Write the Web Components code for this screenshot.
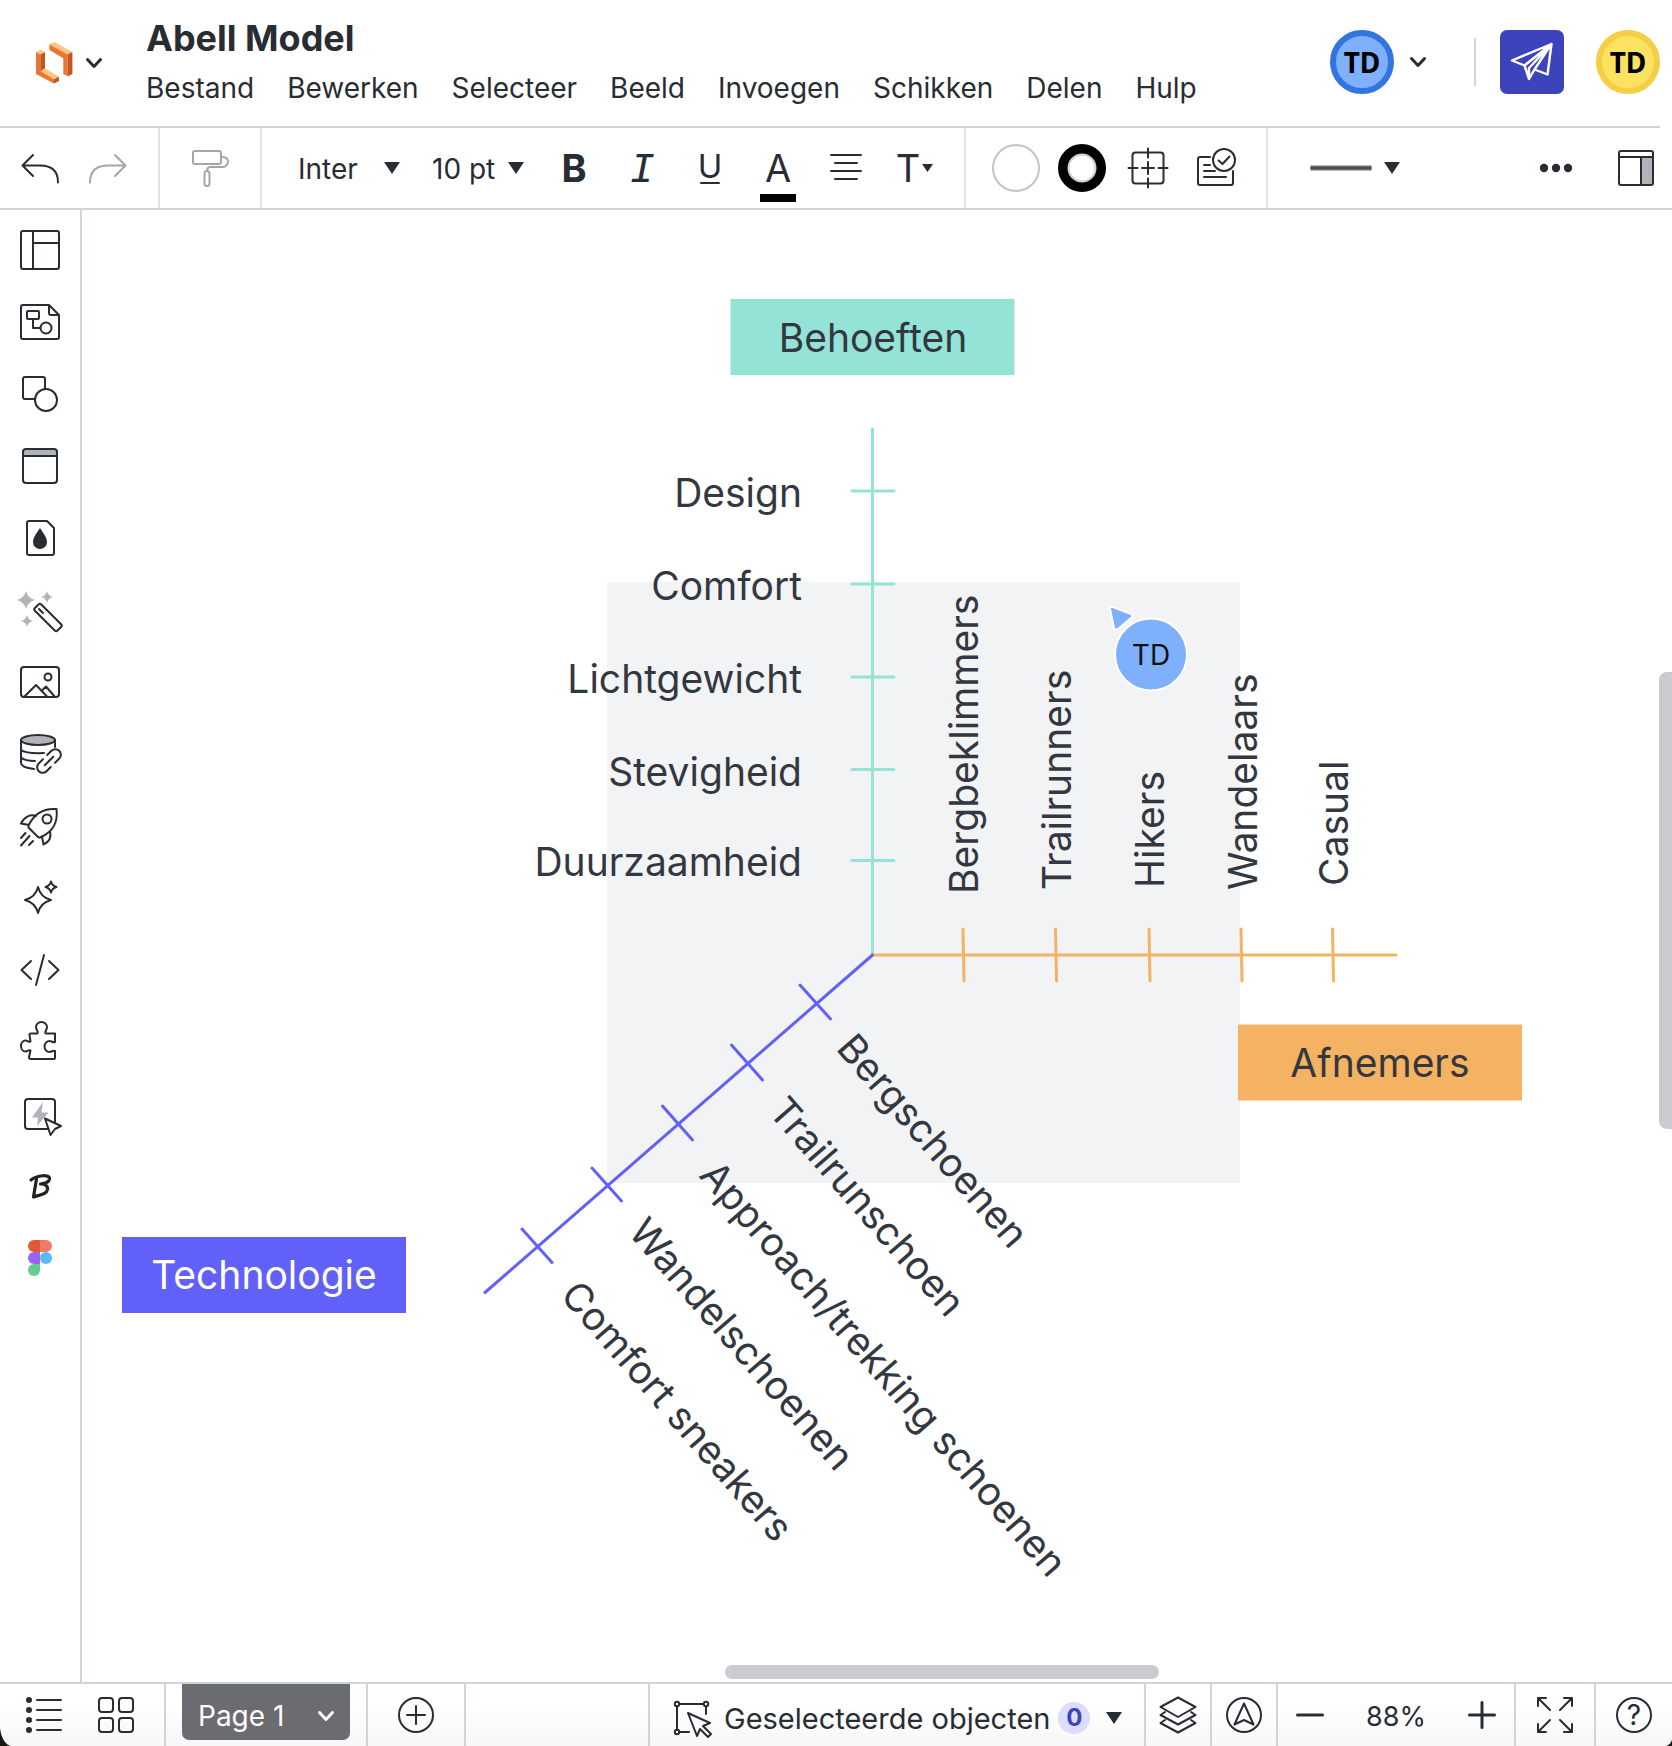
<!DOCTYPE html>
<html lang="nl">
<head>
<meta charset="utf-8">
<meta name="viewport" content="width=device-width, initial-scale=1">
<title>Abell Model</title>
<style>
  html, body { height: 100%; margin: 0; }
  body { background: #1b190f; font-family: Inter, "Liberation Sans", sans-serif; font-size: 28px; color: #282c33; }
</style>
</head>
<body>
<lucid-app></lucid-app>
<script>
const GREY = '#b1b3b8';
const star = (x, y, r) => `M${x} ${y - r}Q${x + r * .2} ${y - r * .2} ${x + r} ${y}Q${x + r * .2} ${y + r * .2} ${x} ${y + r}Q${x - r * .2} ${y + r * .2} ${x - r} ${y}Q${x - r * .2} ${y - r * .2} ${x} ${y - r}z`;

/* Drawings on a 48 x 48 grid, stroked with the current colour. */
const ICONS = {
  logo: `<g stroke="none"><path fill="#f9c77d" d="M19.400 5.300 24.600 3 42.400 13 37.600 15.500zM6 13l4.300-2.200L15 13l-4.700 2.400zM15 29.300l14 8.400-5 2.600-13.700-8z"/><path fill="#eb7533" d="M19.400 5.300 37.600 15.500V37l-4.300-2V19.300L19.400 11zM6 13l4.300 2.400V32L24 40.300v4.200L6 35z"/><path fill="#bf5623" d="M37.600 15.500 42.400 13v22l-4.800 2.500zM10.300 15.400 15 13v16.300l-4.700 2.900zM24 40.300l5-2.600V42l-5 2.500z"/></g>`,
  chevron: `<path stroke-width="3" d="M17.500 20.500 24 27.500 30.500 20.500"/>`,
  undo: `<path d="M17 11 6.500 21.500 17 32M7 21.500h17c12 0 18 6 18 17"/>`,
  redo: `<path stroke="#a5a6ab" d="M31 11 41.500 21.500 31 32M41 21.500H24c-12 0-18 6-18 17"/>`,
  roller: `<g stroke="#a5a6ab"><rect x="7" y="7" width="28" height="13" rx="2"/><path d="M35 13h2c3 0 5 2 5 4.500S40 23 37 23H25c-3 0-4 1.500-4 4"/><rect x="18.500" y="27" width="5" height="15" rx="2.500"/></g>`,
  bold: `<text x="24" y="38" font-size="38" font-weight="700">B</text>`,
  italic: `<text x="24" y="38" font-size="42" font-style="italic" style="font-family:'Liberation Mono',monospace">I</text>`,
  underline: `<text x="24" y="34" font-size="33">U</text><path d="M15 39h18"/>`,
  colour: `<text x="24" y="38" font-size="38">A</text><path fill="#000" stroke="none" d="M6 50h36v8H6z"/>`,
  align: `<path d="M9 11h30M13 19h22M9 27h30M13 35h22"/>`,
  type: `<text x="18" y="38" font-size="38">T</text><path fill="currentColor" stroke="none" d="M32 20h11l-5.500 8z"/>`,
  fill: `<circle cx="24" cy="24" r="23" stroke="#c2c3c6"/>`,
  border: `<circle cx="24" cy="24" r="18.500" stroke="#000" stroke-width="11"/><circle cx="24" cy="24" r="13.500" stroke="#cfd3da"/>`,
  target: `<rect x="8.500" y="8.500" width="31" height="31" rx="3"/><path d="M24 4.500v9M24 34.500v9M4.500 24h9M34.500 24h9M18 24h12M24 18v12"/>`,
  tasks: `<path d="M20 13H10q-2 0-2 2v24q0 2 2 2h31q2 0 2-2V27M14 21h6M14 27h11M14 33h22"/><circle cx="34" cy="16" r="11"/><path d="m28.500 16.500 4 3.500 7-7.500"/>`,
  line: `<path stroke="#6d6e70" stroke-width="5" stroke-linecap="butt" d="M-5.500 24h61"/><path stroke="#4b4b4d" stroke-linecap="butt" d="M-5.500 24h61"/>`,
  triangle: `<path fill="currentColor" stroke="none" d="M16 18h16l-8 12z"/>`,
  dots: `<g fill="currentColor" stroke="none"><circle cx="12" cy="24" r="4.200"/><circle cx="24" cy="24" r="4.200"/><circle cx="36" cy="24" r="4.200"/></g>`,
  panel: `<path fill="${GREY}" stroke="none" d="M29 13h12v28H29z"/><rect x="7" y="7" width="34" height="34" rx="2"/><path d="M7 13h34M29 13v28"/>`,
  send: `<g stroke="#fff" stroke-width="2.400"><path d="M4 22.500 43.500 6 39.500 36.500 26.500 31.500 21 41 16.500 27.500zM16.500 27.500 43.500 6 21 30v11M26.500 31.500 43 6.500"/></g>`,
  layout: `<rect x="5" y="5" width="38" height="38" rx="2"/><path d="M17 5v38M17 17h26"/>`,
  template: `<path d="M7 7h26l10 10v22q0 2-2 2H7q-2 0-2-2V9q0-2 2-2zM33 7v8q0 2 2 2h8M17 21v9h7"/><rect x="11" y="13" width="12" height="8" rx="1"/><circle cx="30" cy="30" r="5.500"/>`,
  shapes: `<path d="M29 18V9q0-2-2-2H9q-2 0-2 2v18q0 2 2 2h9"/><circle cx="30" cy="30" r="11"/>`,
  container: `<path fill="${GREY}" stroke="none" d="M8 8h32v6H8z"/><rect x="7" y="7" width="34" height="34" rx="3"/><path d="M7 14h34"/>`,
  theme: `<path d="M13 7h18l7 7v25q0 2-2 2H13q-2 0-2-2V9q0-2 2-2z"/><path fill="currentColor" stroke="none" d="M24 14c3 5 7 9 7 14a7 7 0 0 1-14 0c0-5 4-9 7-14z"/>`,
  wand: `<g fill="${GREY}" stroke="none"><path d="${star(10, 14, 9)}"/><path d="${star(31, 11, 6)}"/><path d="${star(11, 35, 6)}"/></g><rect x="16" y="27" width="32" height="9" rx="2" transform="rotate(45 32 31.500)"/><path d="m23 23 4 4"/>`,
  image: `<rect x="5" y="9" width="38" height="30" rx="3"/><circle cx="32" cy="19" r="3.500"/><path d="m8 39 12-12 11.500 12M26.500 32l3.500-3.500L39 39"/>`,
  data: `<ellipse cx="22" cy="10" rx="17" ry="5" fill="${GREY}"/><path d="M5 10v23c0 3 5 5 13 6M39 10v7M5 20c4 3 12 3.500 23 3M5 27.500c3 2.500 8 3.500 14 3.500"/><g transform="rotate(-45 33 31)"><path d="M30 25.500h-6a5.500 5.500 0 0 0 0 11h6M36 25.500h6a5.500 5.500 0 0 1 0 11h-6M27 31h12"/></g>`,
  rocket: `<path d="M40.500 7C28 6 18.500 11 12.500 23.500v2L22 35q1 1 3 0C38 29 42 20 40.500 7zM20 14C14 12 8 15 5 21.500l8 1.500M34 29c1.500 6-1 11-6.500 13.500L26 35M5 36l4.500-5M5 43.500 13.500 34M13 43l4-4"/><circle cx="31" cy="17" r="4.500"/>`,
  sparkle: `<path d="${star(22, 26, 13)}"/><path d="${star(35, 13, 5.5)}"/>`,
  code: `<path d="m15 15-9.500 9 9.500 9M28 9l-8 30M33 15l9.500 9L33 33"/>`,
  puzzle: `<path d="M15 15.500h6.500c1.500-2-1.500-3-1.500-6.500a5.500 5 0 0 1 11 0c0 3.500-3 4.500-1.500 6.500H39V24c-2 1-3-1-5.500-1a5 5.500 0 0 0 0 11c2.500 0 3.500-2 5.500-1v7q0 1-1 1H15q-2 0-2-2l1.500-6.500c-2-1-2.500 1-5 1a4.500 5.500 0 0 1 0-11c2.500 0 3 2 5 1l-1-6.500q-.500-1.500 1.500-1.500z"/>`,
  action: `<rect x="9" y="9" width="30" height="30" rx="3"/><path fill="${GREY}" stroke="none" d="m27 12-11 15.500h6L21 36l11.500-13.500H25.500z"/><path fill="#fff" d="M29 28.500 45 36l-6 3-4.500 6z"/>`,
  brand: `<path stroke="#26231f" stroke-width="3.200" d="M15 18c6-5 19-6 18.500-1-.500 3.500-5 4.500-9 5 5 0 7.500 2 7 5.500-1 5.500-9 5.500-14 7.500l3-18"/>`,
  figma: `<g stroke="none"><path fill="#e05a33" d="M24 6h-6a6 6 0 0 0 0 12h6z"/><path fill="#ee7b69" d="M24 6h6a6 6 0 0 1 0 12h-6z"/><path fill="#9764f6" d="M24 18h-6a6 6 0 0 0 0 12h6z"/><circle fill="#58b8f8" cx="30" cy="24" r="6"/><path fill="#61cd8e" d="M24 30h-6a6 6 0 1 0 6 6z"/></g>`,
  list: `<g fill="currentColor" stroke="none"><circle cx="9" cy="9" r="3"/><circle cx="9" cy="19" r="3"/><circle cx="9" cy="29" r="3"/><circle cx="9" cy="39" r="3"/></g><path d="M17 9h24M17 19h24M17 29h24M17 39h24"/>`,
  grid: `<rect x="7" y="7" width="14" height="14" rx="3"/><rect x="27" y="7" width="14" height="14" rx="3"/><rect x="7" y="27" width="14" height="14" rx="3"/><rect x="27" y="27" width="14" height="14" rx="3"/>`,
  add: `<circle cx="24" cy="24" r="17"/><path d="M24 15v18M15 24h18"/>`,
  select: `<path d="M9 10h24M7 12v24M9 38h10M36 13v7"/><circle cx="7" cy="10" r="2.200"/><circle cx="36" cy="10" r="2.200"/><circle cx="7" cy="38" r="2.200"/><path d="m18 19 22 10-7 3 8 8-3 3-8-8-3 7z"/>`,
  layers: `<path d="M24 6.500 41.500 16 24 26 6.500 16zM11 21l-4.500 3L24 33.500 41.500 24 37 21M11 29l-4.500 3L24 41.500 41.500 32 37 29"/>`,
  compass: `<circle cx="24" cy="24" r="17"/><path d="m24 12.500 9.500 21-9.500-4.500-9.500 4.500z"/>`,
  minus: `<path stroke-width="3" d="M11.500 24h25"/>`,
  plus: `<path stroke-width="3" d="M11.500 24h25M24 11.500v25"/>`,
  expand: `<path d="M7 15V7h8M7 7l12 12M33 7h8v8M41 7 29 19M7 33v8h8M7 41l12-12M33 41h8v-8M41 41 29 29"/>`,
  help: `<circle cx="24" cy="24" r="17"/><text x="24" y="34" font-size="28">?</text>`
};

const define = (name, html, setup) => {
  const template = document.createElement('template');
  template.innerHTML = html;
  customElements.define(name, class extends HTMLElement {
    constructor() {
      super();
      this.attachShadow({ mode: 'open' }).append(template.content.cloneNode(true));
    }
    connectedCallback() {
      if (this.ready) return;
      this.ready = true;
      if (setup) setup(this, this.shadowRoot);
    }
  });
};

define('app-icon', `
  <style>
    :host { display: block; flex: none; width: 48px; height: 48px; }
    svg { display: block; width: 48px; height: 48px; overflow: visible; fill: none; stroke: currentColor; stroke-width: 2; stroke-linecap: round; stroke-linejoin: round; }
    text { fill: currentColor; stroke: none; text-anchor: middle; }
  </style>
  <svg viewBox="0 0 48 48" aria-hidden="true"></svg>`,
  (host, root) => { root.querySelector('svg').innerHTML = ICONS[host.getAttribute('name')]; });

define('icon-button', `
  <style>
    :host { display: block; flex: none; width: 68px; }
    button { display: flex; justify-content: center; align-items: center; width: 100%; height: 100%; margin: 0; padding: 0; border: 0; background: none; color: inherit; font: inherit; cursor: pointer; }
  </style>
  <button type="button"></button>`,
  (host, root) => {
    const button = root.querySelector('button');
    const icon = document.createElement('app-icon');
    icon.setAttribute('name', host.getAttribute('icon'));
    button.setAttribute('aria-label', host.getAttribute('label'));
    button.append(icon);
  });

define('drop-down', `
  <style>
    :host { display: grid; align-items: center; }
    select, app-icon { grid-area: 1 / 1; }
    select { appearance: none; width: 100%; height: 40px; margin: 0; padding: 2px 0 0; border: 0; background: none; color: inherit; font: inherit; line-height: 38px; }
    app-icon { justify-self: end; margin-right: -16px; pointer-events: none; }
  </style>
  <select></select><app-icon name="triangle"></app-icon>`,
  (host, root) => {
    const select = root.querySelector('select');
    select.setAttribute('aria-label', host.getAttribute('label'));
    select.add(new Option(host.getAttribute('value')));
  });

define('user-avatar', `
  <style>
    :host { display: grid; place-items: center; flex: none; box-sizing: border-box; width: 64px; height: 64px; border: 6px solid var(--ring); border-radius: 50%; background: var(--disc); color: #000; font-weight: 700; font-family: "Noto Sans", sans-serif; line-height: 40px; }
  </style>
  <slot></slot>`);

define('app-header', `
  <style>
    :host { display: flex; align-items: center; height: 124px; padding-bottom: 2px; margin-right: 12px; border-bottom: 2px solid #cfd3da; }
    .home { display: flex; align-items: center; width: 146px; margin: 0; padding: 2px 0 0 30px; border: 0; background: none; color: inherit; }
    .home app-icon + app-icon { margin-left: -8px; }
    h1 { margin: 0 0 8px; font-size: 36px; line-height: 44px; font-weight: 700; }
    nav { display: flex; gap: 33px; line-height: 40px; }
    nav a { color: inherit; text-decoration: none; }
    .side { display: flex; align-items: center; margin-left: auto; }
    .rule { width: 2px; height: 48px; margin: 0 24px 0 32px; background: #cfd3da; }
    .send { display: grid; place-items: center; width: 64px; height: 64px; margin: 0 32px 0 0; padding: 0; border: 0; border-radius: 7px; background: #3d43bb; }
  </style>
  <button class="home" type="button" aria-label="Startpagina"><app-icon name="logo"></app-icon><app-icon name="chevron"></app-icon></button>
  <div>
    <h1>Abell Model</h1>
    <nav><a href="#">Bestand</a><a href="#">Bewerken</a><a href="#">Selecteer</a><a href="#">Beeld</a><a href="#">Invoegen</a><a href="#">Schikken</a><a href="#">Delen</a><a href="#">Hulp</a></nav>
  </div>
  <div class="side">
    <user-avatar style="--ring:#3375e0;--disc:#7eb0fb">TD</user-avatar>
    <app-icon name="chevron"></app-icon>
    <span class="rule"></span>
    <button class="send" type="button" aria-label="Delen"><app-icon name="send"></app-icon></button>
    <user-avatar style="--ring:#f6ce46;--disc:#fbe261">TD</user-avatar>
  </div>`);

define('tool-group', `
  <style>
    :host { display: flex; align-items: stretch; border-right: 2px solid #dfe2e7; }
    :host(:last-child) { border-right: 0; }
  </style>
  <slot></slot>`);

define('format-bar', `
  <style>
    :host { display: flex; height: 80px; border-bottom: 2px solid #cfd3da; }
    .history { padding: 0 16px 0 6px; }
    .painter { padding: 0 16px; }
    .text { padding: 0 16px 0 36px; }
    .font { width: 102px; margin-right: 32px; }
    .size { width: 92px; margin-right: 16px; }
    .shape { padding: 0 19px 0 17px; }
    .shape icon-button { width: 66px; }
    .lines { flex: 1; padding: 0 2px 0 42px; }
    .stroke { display: flex; align-items: center; gap: 4px; margin: 0; padding: 0 0 0 6px; border: 0; background: none; color: inherit; }
    .more { margin: 0 12px 0 auto; }
  </style>
  <tool-group class="history"><icon-button icon="undo" label="Ongedaan maken"></icon-button><icon-button icon="redo" label="Opnieuw"></icon-button></tool-group>
  <tool-group class="painter"><icon-button icon="roller" label="Opmaak kopiëren"></icon-button></tool-group>
  <tool-group class="text">
    <drop-down class="font" label="Lettertype" value="Inter"></drop-down>
    <drop-down class="size" label="Tekengrootte" value="10 pt"></drop-down>
    <icon-button icon="bold" label="Vet"></icon-button><icon-button icon="italic" label="Cursief"></icon-button><icon-button icon="underline" label="Onderstrepen"></icon-button><icon-button icon="colour" label="Tekstkleur"></icon-button><icon-button icon="align" label="Uitlijnen"></icon-button><icon-button icon="type" label="Tekstopties"></icon-button>
  </tool-group>
  <tool-group class="shape"><icon-button icon="fill" label="Vulling"></icon-button><icon-button icon="border" label="Rand"></icon-button><icon-button icon="target" label="Positie"></icon-button><icon-button icon="tasks" label="Taken"></icon-button></tool-group>
  <tool-group class="lines">
    <button class="stroke" type="button" aria-label="Lijnstijl"><app-icon name="line"></app-icon><app-icon name="triangle"></app-icon></button>
    <icon-button class="more" icon="dots" label="Meer"></icon-button><icon-button icon="panel" label="Paneel"></icon-button>
  </tool-group>`);

define('side-bar', `
  <style>
    :host { display: flex; flex-direction: column; flex: none; width: 80px; padding-top: 4px; border-right: 2px solid #cfd3da; }
    icon-button { width: 80px; height: 72px; }
  </style>`,
  (host, root) => {
    const tools = { layout: 'Indeling', template: 'Sjablonen', shapes: 'Vormen', container: 'Containers', theme: "Thema's", wand: 'Slimme acties', image: 'Afbeeldingen', data: 'Gegevens', rocket: 'Presenteren', sparkle: 'AI', code: 'Diagram als code', puzzle: 'Integraties', action: 'Acties', brand: 'Merk', figma: 'Figma' };
    for (const [icon, label] of Object.entries(tools)) {
      const button = document.createElement('icon-button');
      button.setAttribute('icon', icon);
      button.setAttribute('label', label);
      root.append(button);
    }
  });

/* The drawing board: three axes from one origin, each with its own ticks and labels. */
define('abell-diagram', `
  <style>
    :host { display: block; position: relative; flex: 1; min-width: 0; }
    svg { position: absolute; inset: 0; width: 100%; height: 100%; }
    text { font-size: 39px; fill: #33373f; }
    path { fill: none; stroke-width: 3; stroke-linecap: round; }
    .end { text-anchor: end; }
    .mid { text-anchor: middle; }
    .bar { position: absolute; border-radius: 8px; background: #cacbd0; }
    .across { left: 643px; bottom: 3px; width: 434px; height: 14px; }
    .down { right: 0; top: 462px; width: 13px; height: 457px; border-radius: 8px 0 0 8px; }
  </style>
  <svg viewBox="82 210 1590 1472">
    <rect x="607" y="582" width="633" height="601" fill="#f1f3f5"/>
    <path stroke="#93e4d7" d="M872.500 429V954M852 491h42M852 584h42M852 677h42M852 769.500h42M852 860.500h42"/>
    <path stroke="#f4b262" d="M873 955H1396M963 929l1 52M1055.500 929l1 52M1149 929l1 52M1241 929l1 52M1332.500 929l1 52"/>
    <path stroke="#6161f9" d="M872.500 955 485 1292.500M800 985l30.500 34M731.500 1045l31 35M662.500 1106l30 34M592 1168l29.500 33M522 1229l30 33.500"/>
    <rect x="730.500" y="299" width="284" height="76" fill="#93e4d7"/>
    <rect x="1238" y="1024.500" width="284" height="76" fill="#f4b262"/>
    <rect x="122" y="1237" width="284" height="76" fill="#6161f9"/>
    <text class="mid" x="873" y="352">Behoeften</text>
    <text class="mid" x="1380" y="1077">Afnemers</text>
    <text class="mid" x="264" y="1289" style="fill:#fff">Technologie</text>
    <g class="end"><text x="802" y="507">Design</text><text x="802" y="600">Comfort</text><text x="802" y="693">Lichtgewicht</text><text x="802" y="786">Stevigheid</text><text x="802" y="876">Duurzaamheid</text></g>
    <text transform="translate(978 894) rotate(-90)">Bergbeklimmers</text>
    <text transform="translate(1071 890) rotate(-90)">Trailrunners</text>
    <text transform="translate(1164 888) rotate(-90)">Hikers</text>
    <text transform="translate(1257 890) rotate(-90)">Wandelaars</text>
    <text transform="translate(1348 886) rotate(-90)">Casual</text>
    <text transform="translate(835 1049) rotate(49)">Bergschoenen</text>
    <text transform="translate(767 1112) rotate(49)">Trailrunschoen</text>
    <text transform="translate(698 1176) rotate(49)">Approach/trekking schoenen</text>
    <text transform="translate(627 1233) rotate(49)">Wandelschoenen</text>
    <text transform="translate(559 1296) rotate(49)">Comfort sneakers</text>
    <g fill="#7eb0fb" stroke="#fff" stroke-width="2" stroke-linejoin="round">
      <path style="fill:#7eb0fb;stroke-width:2" d="M1110 609q0-2.500 3-2l18 7q3 2 0 4l-13 11q-3 1.500-4-1z"/>
      <circle cx="1151" cy="654.500" r="36"/>
    </g>
    <text class="mid" x="1151" y="665" style="font-size:28px;fill:#111">TD</text>
  </svg>
  <div class="bar across"></div>
  <div class="bar down"></div>`);

define('status-bar', `
  <style>
    :host { display: flex; flex: none; height: 62px; border-top: 2px solid #cfd3da; background: linear-gradient(#fff 30%, #f7f7f8); }
    .cell { display: flex; align-items: stretch; box-sizing: border-box; border-left: 2px solid #cfd3da; }
    .views { padding: 0 12px 0 8px; border-left: 0; }
    .views icon-button { width: 72px; }
    .pages { padding: 0 16px; }
    .tab { display: flex; align-items: center; justify-content: space-between; width: 168px; height: 56px; margin: 0; padding: 8px 0 0 16px; border: 0; border-radius: 0 0 7px 7px; background: #6b6c70; color: #fff; font: inherit; }
    .add { width: 100px; border-right: 2px solid #cfd3da; }
    .add icon-button, .one icon-button { width: 100%; flex: 1; }
    .tab, .objects, output { line-height: 40px; }
    .objects { width: 496px; margin: 0 0 0 auto; padding: 6px 0 0 20px; align-items: center; border-width: 0 0 0 2px; background: none; color: inherit; font: inherit; font-size: 29px; }
    .name { margin-left: 6px; white-space: nowrap; }
    .count { display: grid; place-items: center; width: 32px; height: 32px; margin-left: 8px; border-radius: 50%; background: #dcdcfb; color: #3d43bb; font-size: 24px; font-weight: 700; line-height: 32px; }
    .small { width: 66px; }
    .zoom { width: 238px; align-items: stretch; justify-content: space-between; }
    .zoom icon-button { width: 64px; }
    output { align-self: center; padding-top: 4px; font-size: 27px; }
    .full { width: 80px; }
    .help { width: 78px; }
  </style>
  <div class="cell views"><icon-button icon="list" label="Lijst"></icon-button><icon-button icon="grid" label="Raster"></icon-button></div>
  <div class="cell pages"><button class="tab" type="button"><span>Page 1</span><app-icon name="chevron"></app-icon></button></div>
  <div class="cell add"><icon-button icon="add" label="Pagina toevoegen"></icon-button></div>
  <button class="cell objects" type="button"><app-icon name="select"></app-icon><span class="name">Geselecteerde objecten</span><span class="count">0</span><app-icon name="triangle"></app-icon></button>
  <div class="cell one small"><icon-button icon="layers" label="Lagen"></icon-button></div>
  <div class="cell one small"><icon-button icon="compass" label="Navigatie"></icon-button></div>
  <div class="cell zoom"><icon-button icon="minus" label="Uitzoomen"></icon-button><output>88%</output><icon-button icon="plus" label="Inzoomen"></icon-button></div>
  <div class="cell one full"><icon-button icon="expand" label="Volledig scherm"></icon-button></div>
  <div class="cell one help"><icon-button icon="help" label="Hulp"></icon-button></div>`);

define('lucid-app', `
  <style>
    :host { display: flex; flex-direction: column; height: 100vh; overflow: hidden; background: #fff; border-radius: 0 0 8px 12px / 0 0 8px 22px; }
    main { display: flex; flex: 1; min-height: 0; }
  </style>
  <app-header></app-header>
  <format-bar></format-bar>
  <main><side-bar></side-bar><abell-diagram></abell-diagram></main>
  <status-bar></status-bar>`);
</script>
</body>
</html>
